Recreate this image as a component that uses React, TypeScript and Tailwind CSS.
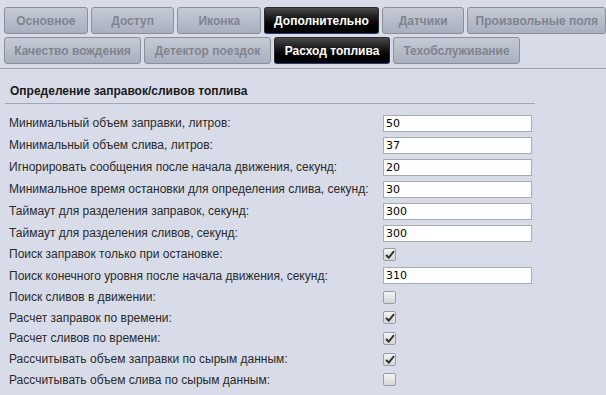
import React from 'react';

const tabsTop = [
  { label: 'Основное', w: 'w-[84px]' },
  { label: 'Доступ', w: 'w-[84px]' },
  { label: 'Иконка', w: 'w-[84px]' },
  { label: 'Дополнительно', w: 'w-[115px]', active: true },
  { label: 'Датчики', w: 'w-[83px]' },
  { label: 'Произвольные поля', w: 'w-[139px]' },
];

const tabsBottom = [
  { label: 'Качество вождения', w: 'w-[137px]' },
  { label: 'Детектор поездок', w: 'w-[127px]' },
  { label: 'Расход топлива', w: 'w-[116px]', active: true },
  { label: 'Техобслуживание', w: 'w-[127px]' },
];

type Row = { label: string; value?: string; checked?: boolean };

const rows: Row[] = [
  { label: 'Минимальный объем заправки, литров:', value: '50' },
  { label: 'Минимальный объем слива, литров:', value: '37' },
  { label: 'Игнорировать сообщения после начала движения, секунд:', value: '20' },
  { label: 'Минимальное время остановки для определения слива, секунд:', value: '30' },
  { label: 'Таймаут для разделения заправок, секунд:', value: '300' },
  { label: 'Таймаут для разделения сливов, секунд:', value: '300' },
  { label: 'Поиск заправок только при остановке:', checked: true },
  { label: 'Поиск конечного уровня после начала движения, секунд:', value: '310' },
  { label: 'Поиск сливов в движении:', checked: false },
  { label: 'Расчет заправок по времени:', checked: true },
  { label: 'Расчет сливов по времени:', checked: true },
  { label: 'Рассчитывать объем заправки по сырым данным:', checked: true },
  { label: 'Рассчитывать объем слива по сырым данным:', checked: false },
];

const Tab = ({ label, w, active }: { label: string; w: string; active?: boolean }) =>
  active ? (
    <div className={`${w} h-[27px] flex items-center justify-center rounded-[3px] border border-[#2a2a2a] border-b-[#24387a] bg-gradient-to-b from-[#4a4a4a] via-[#111] to-[#000] text-white font-bold text-[12px]`}>
      {label}
    </div>
  ) : (
    <div className={`${w} h-[27px] flex items-center justify-center rounded-[3px] border border-[#8a8f9a] bg-gradient-to-b from-[#c5cad6] to-[#a9afbd] text-[#80848e] font-bold text-[12px]`}>
      {label}
    </div>
  );

const Check = ({ on }: { on?: boolean }) => (
  <div className="w-[13px] h-[13px] rounded-[2px] border border-[#9a9da5] bg-gradient-to-b from-[#f4f4f4] to-[#d6d6d6] flex items-center justify-center">
    {on && (
      <svg width="10" height="9" viewBox="0 0 10 9">
        <path d="M1 5 L3.8 7.6 L9 1.2" stroke="#333" strokeWidth="2" fill="none" />
      </svg>
    )}
  </div>
);

export default function App() {
  return (
    <div className="w-[606px] h-[395px] overflow-hidden bg-[#d8dce9] font-['Liberation_Sans',Arial,sans-serif]">
      <div className="pt-[7px] pl-[4px] flex flex-col gap-[3px]">
        <div className="flex gap-[3px]">
          {tabsTop.map((t) => <Tab key={t.label} {...t} />)}
        </div>
        <div className="flex gap-[3px]">
          {tabsBottom.map((t) => <Tab key={t.label} {...t} />)}
        </div>
      </div>
      <div className="mt-[4px] h-[2px] border-t border-[#9ea2ac] border-b-white/40" />

      <div className="pl-[5px] pt-[13px]">
        <div className="w-[530px] border-b border-[#a3a7b1] pl-[5px] pb-[4px] text-[12px] font-bold text-[#1a1a1a] leading-[16px]">
          Определение заправок/сливов топлива
        </div>
        <div className="pt-[8px]">
          {rows.map((r) => (
            <div key={r.label} className={`flex items-center ${r.value ? 'h-[22px]' : 'h-[20.7px]'}`}>
              <div className="w-[378px] pl-[4px] text-[12px] text-[#2a2a2a]">{r.label}</div>
              {r.value ? (
                <div className="w-[149px] h-[17px] bg-white border border-[#a9abb0] pl-[2px] text-[11px] leading-[15px] text-black font-['DejaVu_Sans',Tahoma,sans-serif]">
                  {r.value}
                </div>
              ) : (
                <Check on={r.checked} />
              )}
            </div>
          ))}
        </div>
      </div>
    </div>
  );
}
